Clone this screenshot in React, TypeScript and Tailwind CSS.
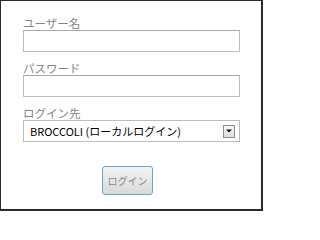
const font = { fontFamily: '"Noto Sans CJK JP", "Noto Sans", sans-serif' };

function FieldLabel({ text }: { text: string }) {
	return (
		<div className="h-[14px] text-[11.5px] leading-[14px] text-[#858585]">
			{text}
		</div>
	);
}

function TextBox() {
	return (
		<div className="h-[22px] w-[217px] border border-[#bdbdbd] border-t-[#a9a9a9] bg-white" />
	);
}

function SelectBox({ value }: { value: string }) {
	return (
		<div className="flex h-[22px] w-[217px] items-center justify-between border border-[#bdbdbd] bg-white pl-[6px] pr-[4px]">
			<span className="text-[11px] leading-[14px] text-black">{value}</span>
			<span className="flex h-[13px] w-[12px] items-center justify-center border border-[#8c8c8c] bg-gradient-to-b from-[#f7f7f7] to-[#dedede]">
				<svg width="6" height="4" viewBox="0 0 6 4">
					<path d="M0 0.5h6L3 3.5z" fill="#111" />
				</svg>
			</span>
		</div>
	);
}

export default function App() {
	return (
		<div
			className="h-[211px] w-[263px] border-t border-l border-r-2 border-b-2 border-[#2b2b2b] bg-white pl-[22px] pt-[15px]"
			style={font}
		>
			<FieldLabel text="ユーザー名" />
			<TextBox />
			<div className="mt-[9px]">
				<FieldLabel text="パスワード" />
				<TextBox />
			</div>
			<div className="mt-[9px]">
				<FieldLabel text="ログイン先" />
				<SelectBox value="BROCCOLI (ローカルログイン)" />
			</div>
			<div className="mt-[24px] pl-[79px]">
				<button className="h-[29px] w-[51px] rounded-[3px] border border-[#5ba8d4] bg-gradient-to-b from-[#f4f4f4] to-[#d9d9d9] text-[10px] text-[#8a8a8a]">
					ログイン
				</button>
			</div>
		</div>
	);
}
